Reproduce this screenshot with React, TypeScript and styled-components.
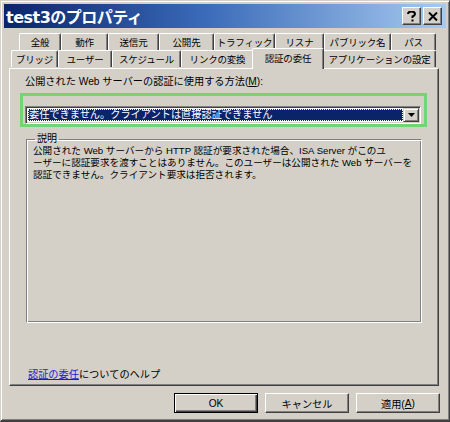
import React from 'react';
import styled, { createGlobalStyle } from 'styled-components';

const GlobalStyle = createGlobalStyle`
  html, body {
    margin: 0;
    padding: 0;
    background: #d4d0c8;
  }
  body {
    font-family: 'Liberation Sans', 'Noto Sans CJK JP', sans-serif;
    font-size: 10px;
    color: #000;
  }
`;

const Window = styled.div`
  box-sizing: border-box;
  width: 450px;
  height: 422px;
  padding: 3px;
  background: #d4d0c8;
  border-top: 1px solid #d4d0c8;
  border-left: 1px solid #d4d0c8;
  border-right: 1px solid #404040;
  border-bottom: 2px solid #404040;
  box-shadow: inset 1px 1px 0 #fff, inset -1px -1px 0 #808080;
  display: flex;
  flex-direction: column;
`;

const TitleBar = styled.div`
  height: 24px;
  display: flex;
  align-items: center;
  justify-content: space-between;
  padding: 0 4px 0 2px;
  background: linear-gradient(90deg, #0a246a 0%, #3a6ab8 45%, #a6caf0 100%);
`;

const Title = styled.span`
  font-family: 'DejaVu Sans', 'Noto Sans CJK JP', sans-serif;
  font-weight: bold;
  font-size: 16px;
  color: #fff;
  letter-spacing: -0.5px;
`;

const TitleButtons = styled.div`
  display: flex;
  gap: 2px;
`;

const CaptionButton = styled.div`
  box-sizing: border-box;
  width: 19px;
  height: 18px;
  background: #d4d0c8;
  border-top: 1px solid #fff;
  border-left: 1px solid #fff;
  border-right: 1px solid #404040;
  border-bottom: 1px solid #404040;
  box-shadow: inset -1px -1px 0 #808080;
  display: flex;
  align-items: center;
  justify-content: center;
`;

const Body = styled.div`
  flex: 1;
  display: flex;
  flex-direction: column;
  padding: 5px 6px 0 5px;
`;

const TabStrip = styled.div`
  display: flex;
  flex-direction: column;
  position: relative;
  z-index: 1;
`;

const TabRow = styled.div<{ $indent: number }>`
  display: flex;
  height: 17px;
  padding-left: ${(p) => p.$indent}px;
`;

const Tab = styled.div<{ $w: number; $active?: boolean }>`
  box-sizing: border-box;
  width: ${(p) => p.$w}px;
  height: ${(p) => (p.$active ? 21 : 17)}px;
  margin-top: ${(p) => (p.$active ? -2 : 0)}px;
  margin-left: ${(p) => (p.$active ? -2 : 0)}px;
  margin-right: ${(p) => (p.$active ? -1 : 0)}px;
  border-top: 1px solid #fff;
  border-left: 1px solid #fff;
  border-right: 1px solid #404040;
  box-shadow: inset -1px 0 0 #808080;
  border-radius: 2px 2px 0 0;
  background: #d4d0c8;
  display: flex;
  align-items: flex-start;
  justify-content: center;
  padding-top: ${(p) => (p.$active ? 3 : 2)}px;
  white-space: nowrap;
  font-size: 9.5px;
  letter-spacing: -0.2px;
  line-height: 13px;
  position: relative;
  z-index: ${(p) => (p.$active ? 2 : 0)};
`;

const Panel = styled.div`
  box-sizing: border-box;
  width: 430px;
  height: 318px;
  margin-top: 1px;
  border-top: 1px solid #fff;
  border-left: 1px solid #fff;
  border-right: 1px solid #404040;
  border-bottom: 1px solid #404040;
  box-shadow: inset -1px -1px 0 #808080;
  display: flex;
  flex-direction: column;
  padding: 6px 0 4px 0;
`;

const FieldLabel = styled.div`
  padding-left: 15px;
  line-height: 13px;
  font-size: 10.2px;
  white-space: nowrap;
`;

const Highlight = styled.div`
  margin: 5px 0 0 10px;
  width: 407px;
  box-sizing: border-box;
  border: 3px solid #72d472;
  padding: 10px 3px 0 2px;
`;

const Select = styled.div`
  box-sizing: border-box;
  height: 18px;
  display: flex;
  background: #fff;
  border-top: 1px solid #808080;
  border-left: 1px solid #808080;
  border-right: 1px solid #fff;
  border-bottom: 1px solid #fff;
  box-shadow: inset 1px 1px 0 #404040, inset -1px -1px 0 #d4d0c8;
  padding: 2px;
`;

const SelectValue = styled.div`
  flex: 1;
  background: #0a246a;
  color: #fff;
  outline: 1px dotted #fff;
  outline-offset: -1px;
  line-height: 12px;
  font-size: 10.2px;
  padding-left: 1px;
  white-space: nowrap;
  overflow: hidden;
`;

const DropButton = styled.div`
  box-sizing: border-box;
  width: 16px;
  margin: -1px -1px -1px 0;
  background: #d4d0c8;
  border-top: 1px solid #d4d0c8;
  border-left: 1px solid #d4d0c8;
  border-right: 1px solid #404040;
  border-bottom: 1px solid #404040;
  box-shadow: inset 1px 1px 0 #fff, inset -1px -1px 0 #808080;
  display: flex;
  align-items: center;
  justify-content: center;
`;

const Group = styled.fieldset`
  margin: 6px 0 0 16px;
  width: 396px;
  min-width: 0;
  height: 190px;
  box-sizing: border-box;
  border-top: 1px solid #808080;
  border-left: 1px solid #808080;
  border-right: 1px solid #fff;
  border-bottom: 1px solid #fff;
  box-shadow: inset 1px 1px 0 #fff, inset -1px -1px 0 #808080;
  padding: 0 0 0 6px;
  overflow: hidden;
`;

const Legend = styled.legend`
  padding: 0 2px;
  margin-left: 2px;
  line-height: 12px;
  font-size: 10px;
`;

const Description = styled.div`
  line-height: 12px;
  font-size: 9.6px;
  white-space: nowrap;
`;

const HelpText = styled.div`
  margin-top: auto;
  padding-left: 18px;
  line-height: 13px;
  font-size: 10.2px;
  white-space: nowrap;
`;

const HelpLink = styled.a`
  color: #1a1ad0;
  text-decoration: underline;
`;

const ButtonRow = styled.div`
  display: flex;
  justify-content: flex-end;
  gap: 7px;
  margin-top: 7px;
`;

const Button = styled.div<{ $default?: boolean }>`
  box-sizing: border-box;
  width: 84px;
  height: 20px;
  background: #d4d0c8;
  border: 1px solid;
  border-top-color: ${(p) => (p.$default ? '#000' : '#fff')};
  border-left-color: ${(p) => (p.$default ? '#000' : '#fff')};
  border-right-color: ${(p) => (p.$default ? '#000' : '#404040')};
  border-bottom-color: ${(p) => (p.$default ? '#000' : '#404040')};
  box-shadow: ${(p) =>
    p.$default
      ? 'inset 1px 1px 0 #fff, inset -1px -1px 0 #404040, inset -2px -2px 0 #808080'
      : 'inset -1px -1px 0 #808080'};
  display: flex;
  align-items: center;
  justify-content: center;
  font-size: 10.2px;
`;

const rowOne = [
  { label: '全般', w: 42 },
  { label: '動作', w: 47 },
  { label: '送信元', w: 51 },
  { label: '公開先', w: 55 },
  { label: 'トラフィック', w: 61 },
  { label: 'リスナ', w: 49 },
  { label: 'パブリック名', w: 67 },
  { label: 'パス', w: 45 },
];

const rowTwo = [
  { label: 'ブリッジ', w: 47 },
  { label: 'ユーザー', w: 54 },
  { label: 'スケジュール', w: 69 },
  { label: 'リンクの変換', w: 73 },
  { label: '認証の委任', w: 72, active: true },
  { label: 'アプリケーションの設定', w: 113 },
];

function App() {
  return (
    <>
      <GlobalStyle />
      <Window>
        <TitleBar>
          <Title>test3のプロパティ</Title>
          <TitleButtons>
            <CaptionButton>
              <svg width="9" height="11" viewBox="0 0 9 11">
                <path d="M1 3 Q1 0.5 4.5 0.5 Q8 0.5 8 3 Q8 4.5 5.5 5.5 L5.5 7" fill="none" stroke="#000" strokeWidth="2" />
                <rect x="4.5" y="8.5" width="2" height="2" fill="#000" />
              </svg>
            </CaptionButton>
            <CaptionButton>
              <svg width="10" height="9" viewBox="0 0 10 9">
                <path d="M1 0.5 L9 8.5 M9 0.5 L1 8.5" stroke="#000" strokeWidth="2" />
              </svg>
            </CaptionButton>
          </TitleButtons>
        </TitleBar>
        <Body>
          <TabStrip>
            <TabRow $indent={10}>
              {rowOne.map((t) => (
                <Tab key={t.label} $w={t.w}>
                  {t.label}
                </Tab>
              ))}
            </TabRow>
            <TabRow $indent={2}>
              {rowTwo.map((t) => (
                <Tab key={t.label} $w={t.w} $active={t.active}>
                  {t.label}
                </Tab>
              ))}
            </TabRow>
          </TabStrip>
          <Panel>
            <FieldLabel>
              公開された Web サーバーの認証に使用する方法(<u>M</u>):
            </FieldLabel>
            <Highlight>
              <Select>
                <SelectValue>委任できません。クライアントは直接認証できません</SelectValue>
                <DropButton>
                  <svg width="7" height="4" viewBox="0 0 7 4">
                    <path d="M0 0 H7 L3.5 4 Z" fill="#000" />
                  </svg>
                </DropButton>
              </Select>
            </Highlight>
            <Group>
              <Legend>説明</Legend>
              <Description>
                公開された Web サーバーから HTTP 認証が要求された場合、ISA Server がこのユ
                <br />
                ーザーに認証要求を渡すことはありません。このユーザーは公開された Web サーバーを
                <br />
                認証できません。クライアント要求は拒否されます。
              </Description>
            </Group>
            <HelpText>
              <HelpLink>認証の委任</HelpLink>についてのヘルプ
            </HelpText>
          </Panel>
          <ButtonRow>
            <Button $default>OK</Button>
            <Button>キャンセル</Button>
            <Button>
              適用(<u>A</u>)
            </Button>
          </ButtonRow>
        </Body>
      </Window>
    </>
  );
}

export default App;
